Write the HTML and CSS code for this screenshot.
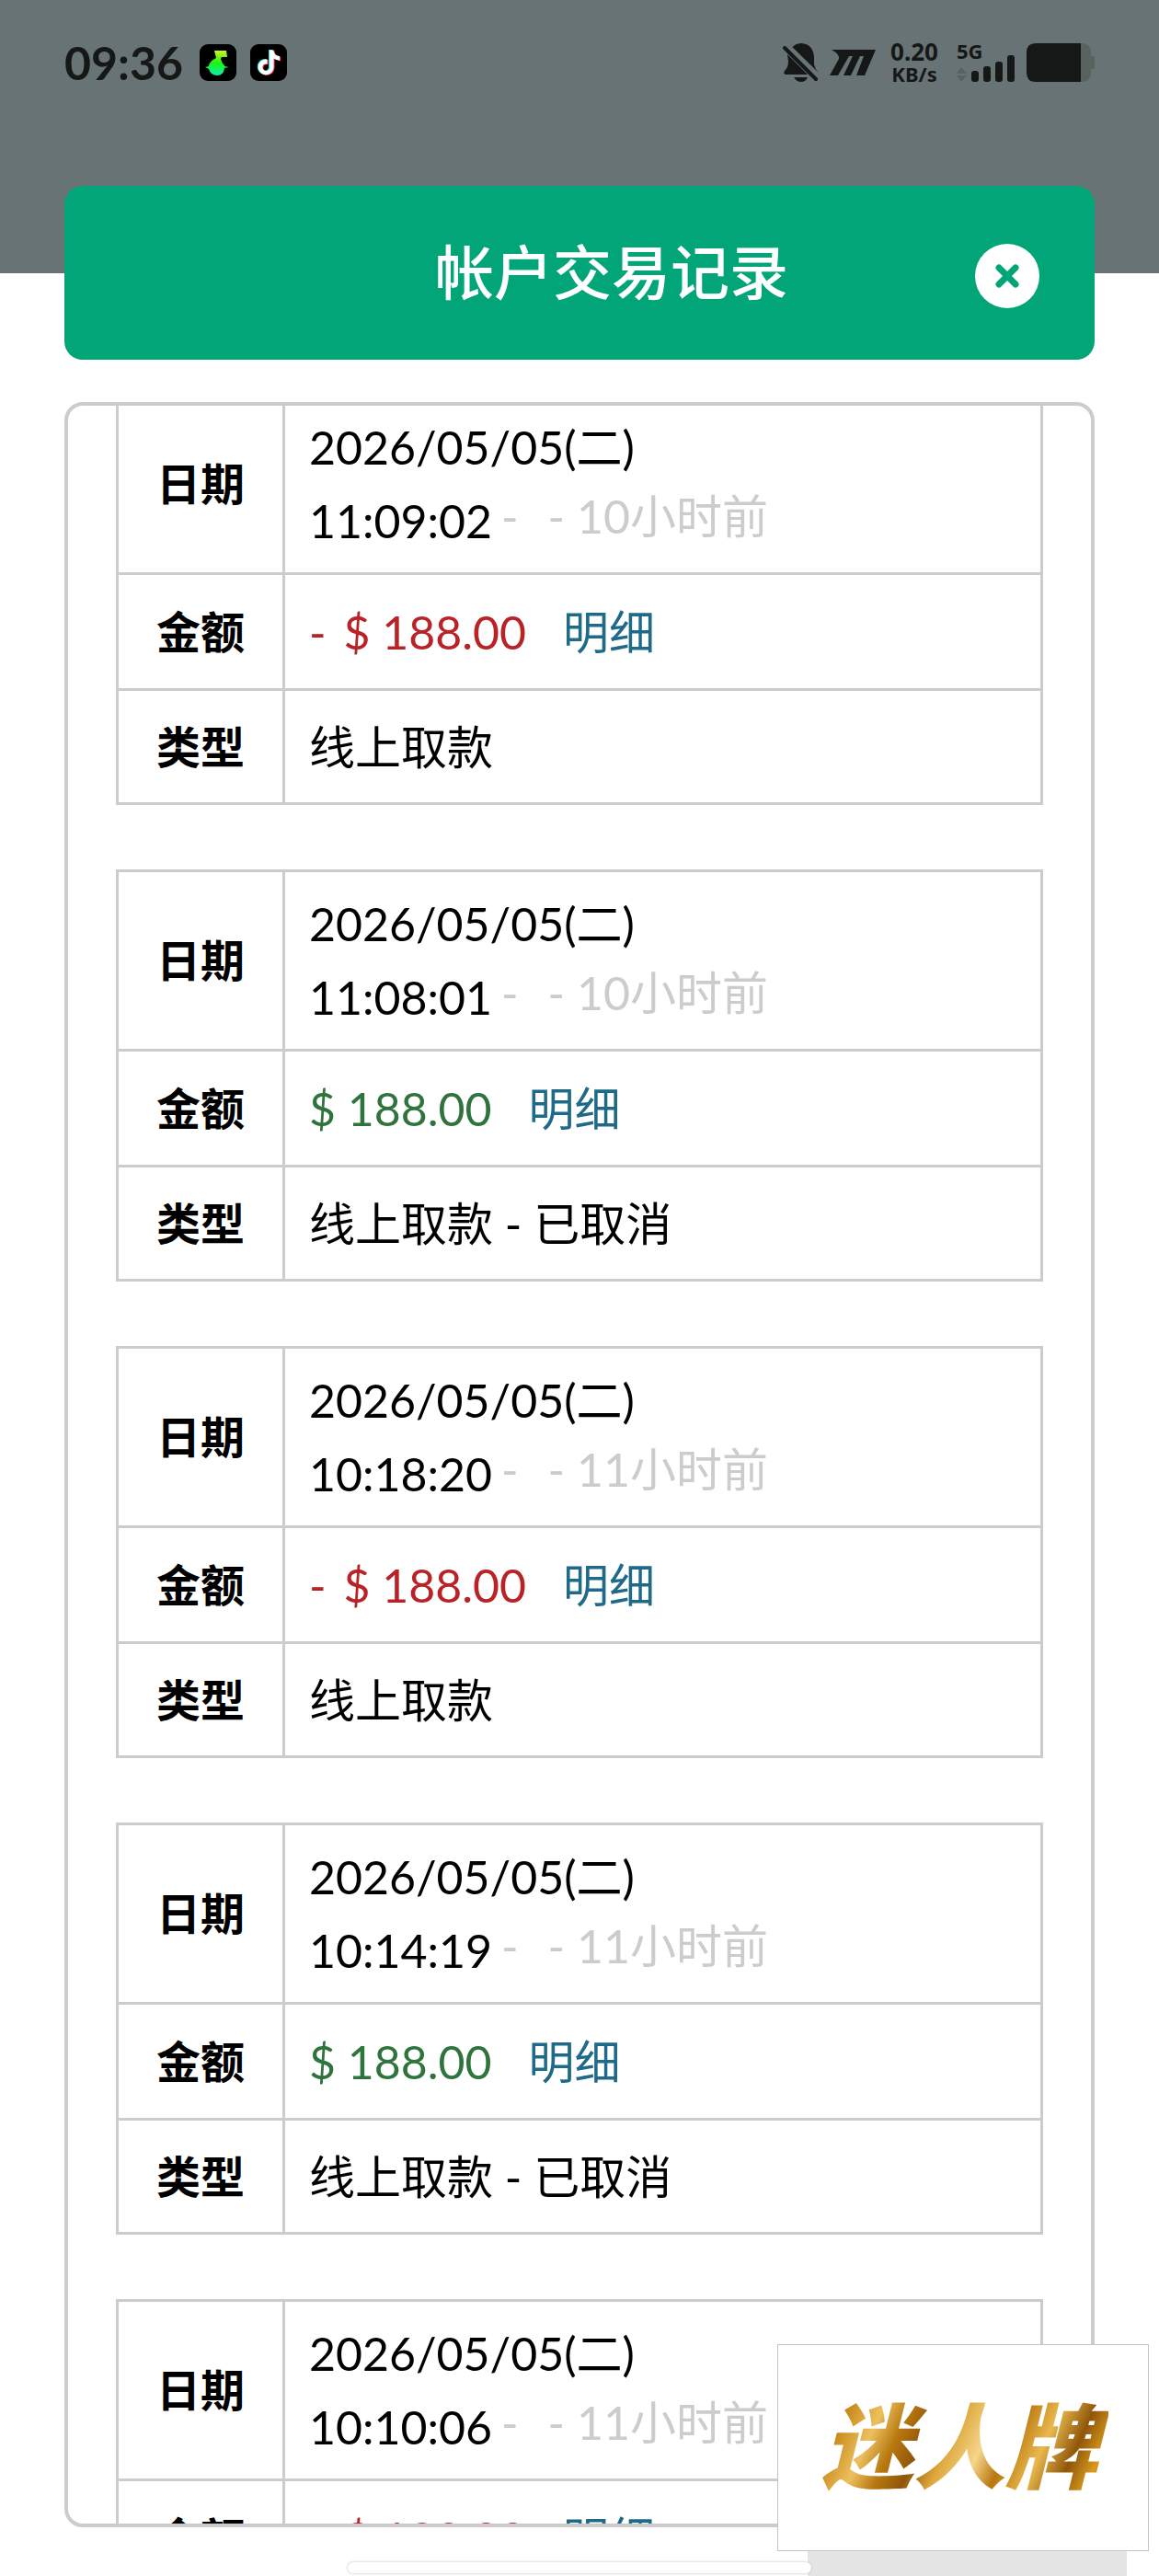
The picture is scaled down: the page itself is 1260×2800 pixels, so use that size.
FILE: index.html
```html
<!DOCTYPE html>
<html lang="zh-CN">
<head>
<meta charset="utf-8">
<meta name="viewport" content="width=device-width, initial-scale=1">
<title>帐户交易记录</title>
<link rel="stylesheet" href="styles.css">
</head>
<body>
<div class="status-bar">
  <div class="status-left">
    <time class="clock">09:36</time>
    <svg class="app-icon" viewBox="0 0 40 40" aria-hidden="true">
      <defs><linearGradient id="lime" x1="0" y1="0" x2="0" y2="1"><stop offset="0" stop-color="#d8f020"/><stop offset=".5" stop-color="#18f410"/><stop offset="1" stop-color="#10f0b8"/></linearGradient></defs>
      <rect width="40" height="40" rx="9"/>
      <path fill="url(#lime)" d="M16 7h13l1 7h-6l-1 2 2 5q2 1 2 3l5 1-5 1q-1 8-8 8t-9-7l-4-2 4-1q0-5 8-9z"/>
    </svg>
    <svg class="app-icon" viewBox="0 0 40 40" aria-hidden="true">
      <defs><path id="note" d="M12.525.02c1.31-.02 2.61-.01 3.91-.02.08 1.53.63 3.09 1.75 4.17 1.12 1.11 2.7 1.62 4.24 1.79v4.03c-1.44-.05-2.89-.35-4.2-.97-.57-.26-1.1-.59-1.62-.93-.01 2.92.01 5.84-.02 8.75-.08 1.4-.54 2.79-1.35 3.94-1.31 1.92-3.58 3.17-5.91 3.21-1.43.08-2.86-.31-4.08-1.03-2.02-1.19-3.44-3.37-3.65-5.71-.02-.5-.03-1-.01-1.49.18-1.9 1.12-3.72 2.58-4.96 1.66-1.44 3.98-2.13 6.15-1.72.02 1.48-.04 2.96-.04 4.44-.99-.32-2.15-.23-3.02.37-.63.41-1.11 1.04-1.36 1.75-.21.51-.15 1.07-.14 1.61.24 1.64 1.82 3.02 3.5 2.87 1.12-.01 2.19-.66 2.77-1.61.19-.33.4-.67.41-1.06.1-1.79.06-3.57.07-5.36.01-4.03-.01-8.05.02-12.07z"/></defs>
      <rect width="40" height="40" rx="9"/>
      <use href="#note" fill="#25e5e0" transform="translate(6 6) scale(1.12)"/>
      <use href="#note" fill="#fb2a55" transform="translate(8 7) scale(1.12)"/>
      <use href="#note" fill="#fff" transform="translate(7 6.500) scale(1.12)"/>
    </svg>
  </div>
  <div class="status-right">
    <svg class="bell" viewBox="0 0 40 42" aria-hidden="true">
      <path d="M9 6Q13 0 20 0q13 1 14 15v8q1 5 5 9L12 6zM5 12l22 22H3q-3-1-1-4 4-4 4-10zM12 37h15q-2 5-7 5t-8-5z"/>
      <path d="M5 1l36 36" fill="none" stroke="#687375" stroke-width="3"/>
      <path d="M2 5l34 34" fill="none" stroke="#151817" stroke-width="4" stroke-linecap="round"/>
    </svg>
    <svg class="mark" viewBox="0 0 50 28" aria-hidden="true">
      <path d="M2 0h48L38 28h-9L37 7h-4L23 28h-8L25 7h-4L9 28H0L10 10Q11 5 2 0z"/>
    </svg>
    <div class="speed"><span class="speed-value">0.20</span><span class="speed-unit">KB/s</span></div>
    <div class="signal">
      <span class="network">5G</span>
      <svg viewBox="0 0 64 42" aria-hidden="true">
        <path fill="#58625f" d="M0 33l5-7 6 7zM0 35h11l-6 7z"/>
        <rect x="16" y="30" width="8" height="12" rx="3"/><rect x="29" y="25" width="8" height="17" rx="3"/><rect x="42" y="20" width="8" height="22" rx="3"/><rect x="55" y="13" width="8" height="29" rx="3"/>
      </svg>
    </div>
    <svg class="battery" viewBox="0 0 74 42" aria-hidden="true">
      <path fill="#58625f" d="M58 0h2q10 0 10 10v4h2q2 0 2 2v10q0 2-2 2h-2v4q0 10-10 10h-2z"/>
      <path d="M10 0h49v42H10Q0 42 0 32V10Q0 0 10 0z"/>
    </svg>
  </div>
</div>

<main class="dialog">
  <header class="dialog-header">
    <h1 class="title">帐户交易记录</h1>
    <button class="close" type="button" aria-label="关闭">
      <svg viewBox="0 0 70 70" aria-hidden="true"><path d="M26 26l18 18M44 26L26 44"/></svg>
    </button>
  </header>

  <section class="panel">
    <div class="records">
      <table class="record">
        <tr class="when"><th scope="row">日期</th><td>2026/05/05(二)<br>11:09:02<span class="ago"><span class="dash">-</span>- 10小时前</span></td></tr>
        <tr><th scope="row">金额</th><td><span class="minus"><span class="sign">-</span> $ 188.00</span><a class="detail" href="#">明细</a></td></tr>
        <tr><th scope="row">类型</th><td>线上取款</td></tr>
      </table>
      <table class="record">
        <tr class="when"><th scope="row">日期</th><td>2026/05/05(二)<br>11:08:01<span class="ago"><span class="dash">-</span>- 10小时前</span></td></tr>
        <tr><th scope="row">金额</th><td><span class="plus">$ 188.00</span><a class="detail" href="#">明细</a></td></tr>
        <tr><th scope="row">类型</th><td>线上取款 - 已取消</td></tr>
      </table>
      <table class="record">
        <tr class="when"><th scope="row">日期</th><td>2026/05/05(二)<br>10:18:20<span class="ago"><span class="dash">-</span>- 11小时前</span></td></tr>
        <tr><th scope="row">金额</th><td><span class="minus"><span class="sign">-</span> $ 188.00</span><a class="detail" href="#">明细</a></td></tr>
        <tr><th scope="row">类型</th><td>线上取款</td></tr>
      </table>
      <table class="record">
        <tr class="when"><th scope="row">日期</th><td>2026/05/05(二)<br>10:14:19<span class="ago"><span class="dash">-</span>- 11小时前</span></td></tr>
        <tr><th scope="row">金额</th><td><span class="plus">$ 188.00</span><a class="detail" href="#">明细</a></td></tr>
        <tr><th scope="row">类型</th><td>线上取款 - 已取消</td></tr>
      </table>
      <table class="record">
        <tr class="when"><th scope="row">日期</th><td>2026/05/05(二)<br>10:10:06<span class="ago"><span class="dash">-</span>- 11小时前</span></td></tr>
        <tr><th scope="row">金额</th><td><span class="minus"><span class="sign">-</span> $ 188.00</span><a class="detail" href="#">明细</a></td></tr>
        <tr><th scope="row">类型</th><td>线上取款</td></tr>
      </table>
    </div>
  </section>
</main>

<div class="corner-tab"></div>
<div class="home-bar"></div>
<div class="badge"><span class="badge-text">迷人牌</span></div>
</body>
</html>
```

FILE: styles.css
```css
* { box-sizing: border-box; }

body {
  margin: 0;
  height: 100vh;
  position: relative;
  display: flex;
  flex-direction: column;
  overflow: hidden;
  background: linear-gradient(#687375 297px, #fff 297px);
  color: #000;
  font: 50px/80px Lato, "Noto Sans CJK SC", sans-serif;
}

svg { display: block; fill: #151817; }

.status-bar {
  display: flex;
  justify-content: space-between;
  align-items: center;
  height: 136px;
  padding: 0 70px;
  color: #151817;
}
.status-left { display: flex; align-items: center; gap: 15px; }
.clock { font-weight: 700; margin-right: 3px; }
.app-icon { width: 40px; height: 40px; fill: #000; }

.status-right { display: flex; align-items: center; }
.bell { width: 40px; height: 42px; margin-right: 11px; }
.mark { width: 50px; height: 28px; margin-right: 14px; }
.speed {
  display: flex;
  flex-direction: column;
  align-items: center;
  width: 56px;
  margin-right: 18px;
  font-family: "Noto Sans", sans-serif;
  font-weight: 700;
}
.speed-value { font-size: 26px; line-height: 24px; }
.speed-unit { font-size: 22px; line-height: 24px; }
.signal { position: relative; width: 64px; margin-right: 12px; }
.network {
  position: absolute;
  top: -4px;
  left: 0;
  font: 700 22px/24px "Noto Sans", sans-serif;
}
.battery { width: 74px; height: 42px; }

.dialog {
  flex: 1;
  min-height: 0;
  display: flex;
  flex-direction: column;
  gap: 46px;
  padding: 66px 70px 53px;
}

.dialog-header {
  display: grid;
  grid-template-columns: 140px 1fr 70px;
  align-items: center;
  flex: none;
  height: 189px;
  padding: 6px 60px 0;
  border-radius: 20px;
  background: #02a578;
}
.title {
  grid-column: 2;
  margin: 0;
  padding-bottom: 8px;
  text-align: center;
  color: #fff;
  font-size: 64px;
  font-weight: 500;
}
.close {
  width: 70px;
  height: 70px;
  padding: 0;
  border: 0;
  border-radius: 50%;
  background: #fff;
  cursor: pointer;
}
.close path { fill: none; stroke: #02a578; stroke-width: 7; stroke-linecap: round; }

.panel {
  flex: 1;
  min-height: 0;
  overflow: hidden;
  border: 4px solid #ccc;
  border-radius: 20px;
}
/* the list is scrolled slightly past its first border */
.records {
  display: flex;
  flex-direction: column;
  gap: 70px;
  margin-top: -14px;
  padding: 0 52px;
}

.record {
  width: 100%;
  table-layout: fixed;
  border-collapse: collapse;
}
.record tr { height: 126px; }
.record tr:last-child { height: 124px; }
.record .when { height: 195px; }
.record th, .record td { border: 3px solid #ccc; padding: 0; vertical-align: middle; }
.record th { width: 181px; font-size: 48px; font-weight: 600; }
.record td { padding-left: 26px; white-space: nowrap; }

.ago { margin-left: 10px; color: #ccc; vertical-align: 5px; line-height: 1; }
.dash { margin-right: 32px; }
.sign { margin-right: 6px; }
.minus { color: #b92327; }
.plus { color: #2f743d; }
.detail { margin-left: 40px; color: #1f6a88; text-decoration: none; }

.home-bar {
  position: absolute;
  bottom: 3px;
  left: 50%;
  width: 40%;
  height: 12px;
  transform: translateX(-50%);
  border-radius: 6px;
  background: #fff;
  box-shadow: 0 0 3px #bbb;
}
.corner-tab {
  position: absolute;
  right: 35px;
  bottom: 0;
  width: 347px;
  height: 60px;
  background: #e5e5e5;
}
.badge {
  position: absolute;
  right: 11px;
  bottom: 27px;
  width: 404px;
  height: 225px;
  display: flex;
  align-items: center;
  justify-content: center;
  padding-bottom: 14px;
  border: 1px solid #c4c4c4;
  background: #fff;
}
.badge-text {
  padding: 0 12px 0 4px;
  font: italic 900 100px/120px "Noto Sans CJK SC", sans-serif;
  color: transparent;
  background: linear-gradient(115deg, #a8690c, #c98a1a 12%, #ecc060 22%, #b8770f 30%, #8f560a 38%, #dca63a 46%, #f5d68a 56%, #b8770f 64%, #e9b94e 74%, #8f560a 84%, #d99a1e 92%, #a66a10);
  background-clip: text;
  -webkit-background-clip: text;
}
```
